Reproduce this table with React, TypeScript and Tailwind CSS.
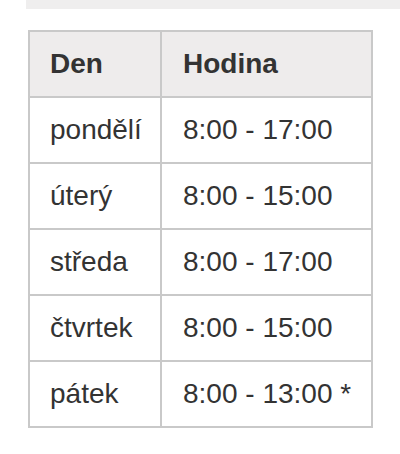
const rows = [
  ['pondělí', '8:00 - 17:00'],
  ['úterý', '8:00 - 15:00'],
  ['středa', '8:00 - 17:00'],
  ['čtvrtek', '8:00 - 15:00'],
  ['pátek', '8:00 - 13:00 *'],
];

export default function App() {
  return (
    <div className="w-[400px] h-[454px] bg-white font-['Liberation_Sans',Arial,sans-serif] text-[#333]">
      <div className="ml-[26px] h-[9px] bg-[#efeeee]" />
      <div className="pt-[21px] pl-[28px]">
        <table className="w-[345px] border-collapse border-2 border-[#c9c9c9] text-[28px] leading-none">
          <thead>
            <tr className="bg-[#eeecec]">
              <th className="w-[132px] h-[66px] border-2 border-[#c9c9c9] pl-5 pr-4 text-left font-bold">Den</th>
              <th className="h-[66px] border-2 border-[#c9c9c9] pl-[21px] pr-4 text-left font-bold">Hodina</th>
            </tr>
          </thead>
          <tbody>
            {rows.map(([day, hours]) => (
              <tr key={day}>
                <td className="h-[66px] border-2 border-[#c9c9c9] pl-5 pr-4">{day}</td>
                <td className="h-[66px] border-2 border-[#c9c9c9] pl-[21px] pr-4">{hours}</td>
              </tr>
            ))}
          </tbody>
        </table>
      </div>
    </div>
  );
}
